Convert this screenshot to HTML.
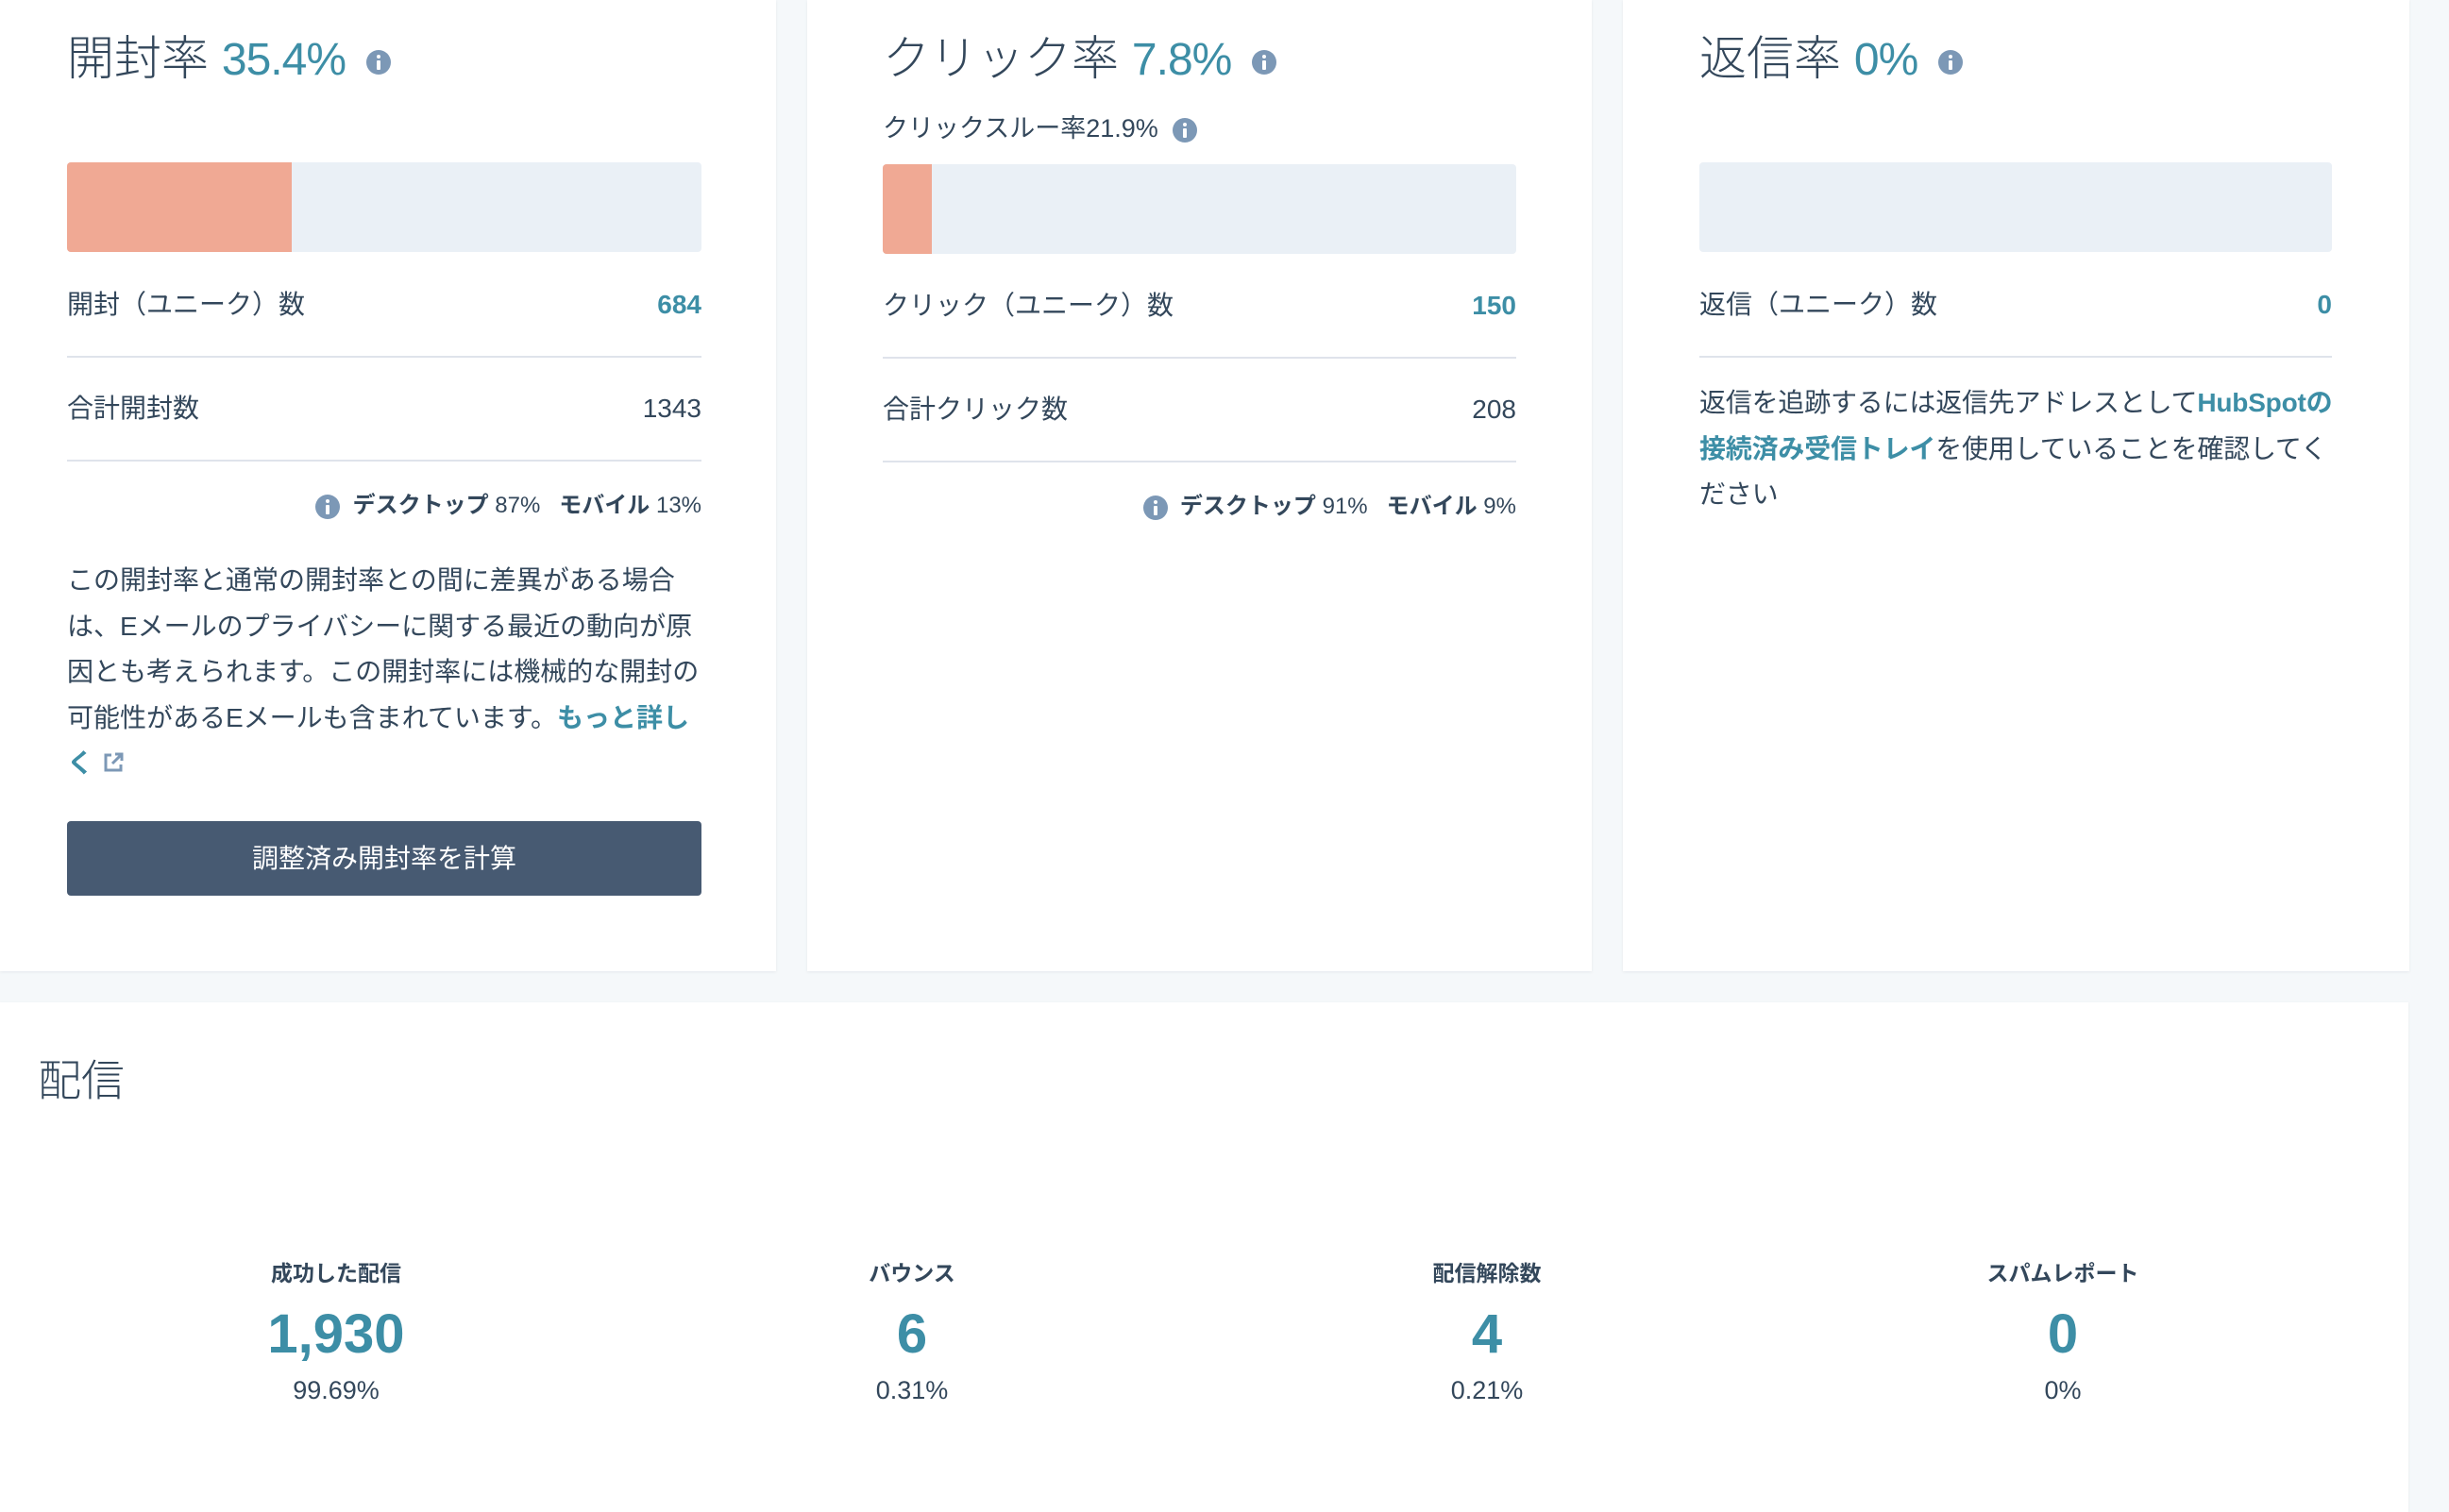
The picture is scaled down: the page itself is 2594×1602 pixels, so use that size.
<!DOCTYPE html>
<html><head><meta charset="utf-8"><style>
*{margin:0;padding:0;box-sizing:border-box}
body{width:2594px;height:1596px;background:#f5f8fa;font-family:"Liberation Sans","Noto Sans CJK JP",sans-serif;color:#33475b;position:relative;overflow:hidden}
.card{position:absolute;background:#fff;box-shadow:0 1px 3px rgba(45,62,80,.08)}
.a{position:absolute;white-space:nowrap}
.t{font-size:50px;font-weight:300;line-height:60px}
.t span{color:#3d8ea6;font-size:48px;letter-spacing:-1px}
.info{display:inline-block;width:26px;height:26px;border-radius:50%;background:#7c98b6;position:relative;vertical-align:middle}
.info:before{content:"";position:absolute;left:11px;top:5px;width:4px;height:4px;background:#fff;border-radius:2px}
.info:after{content:"";position:absolute;left:11px;top:11px;width:4px;height:10px;background:#fff;border-radius:1px}
.bar{position:absolute;height:95px;background:#eaf0f6;border-radius:4px;overflow:hidden}
.bar i{position:absolute;left:0;top:0;bottom:0;background:#f0a994}
.row{font-size:28px;line-height:40px}
.hr{position:absolute;height:2px;background:#dfe3eb}
.teal{color:#3d8ea6}
.b{font-weight:bold}
.small{font-size:24px;line-height:34px}
.p{font-size:28px;line-height:48.5px}
.lbl{font-size:23px;font-weight:bold;text-align:center;width:500px}
.num{font-size:58px;color:#3d8ea6;text-align:center;width:500px;font-weight:bold}
.pct{font-size:27px;text-align:center;width:500px}
</style></head><body>

<div class="card" style="left:0;top:0;width:822px;height:1029px"></div>
<div class="card" style="left:855px;top:0;width:831px;height:1029px"></div>
<div class="card" style="left:1719px;top:0;width:833px;height:1029px"></div>
<div class="card" style="left:0;top:1062px;width:2551px;height:540px"></div>

<!-- card 1 -->
<div class="a t" style="left:71px;top:32px">開封率 <span>35.4%</span> <i class="info" style="margin-left:8px"></i></div>
<div class="bar" style="left:71px;top:172px;width:672px"><i style="width:238px"></i></div>
<div class="a row" style="left:71px;top:303px">開封（ユニーク）数</div>
<div class="a row teal b" style="right:1851px;top:303px">684</div>
<div class="hr" style="left:71px;top:377px;width:672px"></div>
<div class="a row" style="left:71px;top:413px">合計開封数</div>
<div class="a row" style="right:1851px;top:413px">1343</div>
<div class="hr" style="left:71px;top:487px;width:672px"></div>
<div class="a small" style="right:1851px;top:519px"><i class="info"></i>&nbsp; <b>デスクトップ</b> 87% &nbsp; <b>モバイル</b> 13%</div>
<div class="a p" style="left:71px;top:591px">この開封率と通常の開封率との間に差異がある場合<br>は、Eメールのプライバシーに関する最近の動向が原<br>因とも考えられます。この開封率には機械的な開封の<br>可能性があるEメールも含まれています。<span class="teal b">もっと詳し<br>く</span> <svg width="26" height="26" viewBox="0 0 26 26" style="vertical-align:-3px"><path d="M11 5H5v16h16v-6" fill="none" stroke="#7c98b6" stroke-width="3"/><path d="M15 4h7v7M22 4L12 14" fill="none" stroke="#7c98b6" stroke-width="3"/></svg></div>
<div class="a" style="left:71px;top:870px;width:672px;height:79px;background:#475a72;border-radius:4px;color:#fff;font-size:28px;line-height:79px;text-align:center">調整済み開封率を計算</div>

<!-- card 2 -->
<div class="a t" style="left:935px;top:32px">クリック率 <span>7.8%</span> <i class="info" style="margin-left:8px"></i></div>
<div class="a" style="left:935px;top:118px;font-size:27px;line-height:36px">クリックスルー率21.9% &nbsp;<i class="info"></i></div>
<div class="bar" style="left:935px;top:174px;width:671px"><i style="width:52px"></i></div>
<div class="a row" style="left:935px;top:304px">クリック（ユニーク）数</div>
<div class="a row teal b" style="right:988px;top:304px">150</div>
<div class="hr" style="left:935px;top:378px;width:671px"></div>
<div class="a row" style="left:935px;top:414px">合計クリック数</div>
<div class="a row" style="right:988px;top:414px">208</div>
<div class="hr" style="left:935px;top:488px;width:671px"></div>
<div class="a small" style="right:988px;top:520px"><i class="info"></i>&nbsp; <b>デスクトップ</b> 91% &nbsp; <b>モバイル</b> 9%</div>

<!-- card 3 -->
<div class="a t" style="left:1800px;top:32px">返信率 <span>0%</span> <i class="info" style="margin-left:8px"></i></div>
<div class="bar" style="left:1800px;top:172px;width:670px"></div>
<div class="a row" style="left:1800px;top:303px">返信（ユニーク）数</div>
<div class="a row teal b" style="right:124px;top:303px">0</div>
<div class="hr" style="left:1800px;top:377px;width:670px"></div>
<div class="a p" style="left:1800px;top:403px;letter-spacing:-0.2px">返信を追跡するには返信先アドレスとして<span class="teal b">HubSpotの<br>接続済み受信トレイ</span>を使用していることを確認してく<br>ださい</div>

<!-- bottom -->
<div class="a" style="left:40px;top:1116px;font-size:46px;line-height:58px;font-weight:300">配信</div>
<div class="a lbl" style="left:106px;top:1330px">成功した配信</div>
<div class="a num" style="left:106px;top:1380px">1,930</div>
<div class="a pct" style="left:106px;top:1458px">99.69%</div>
<div class="a lbl" style="left:716px;top:1330px">バウンス</div>
<div class="a num" style="left:716px;top:1380px">6</div>
<div class="a pct" style="left:716px;top:1458px">0.31%</div>
<div class="a lbl" style="left:1325px;top:1330px">配信解除数</div>
<div class="a num" style="left:1325px;top:1380px">4</div>
<div class="a pct" style="left:1325px;top:1458px">0.21%</div>
<div class="a lbl" style="left:1935px;top:1330px">スパムレポート</div>
<div class="a num" style="left:1935px;top:1380px">0</div>
<div class="a pct" style="left:1935px;top:1458px">0%</div>
</body></html>
